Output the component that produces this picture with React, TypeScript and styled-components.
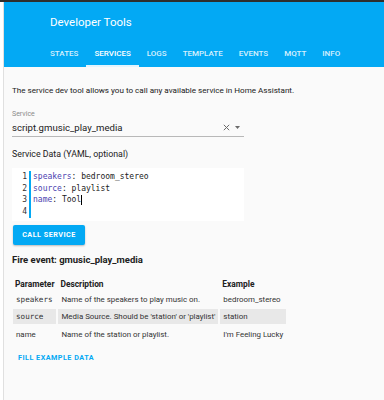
import React from "react";
import styled, { createGlobalStyle } from "styled-components";

const Global = createGlobalStyle`
  html, body { margin: 0; padding: 0; background: #ffffff; }
  body { font-family: Roboto, "Liberation Sans", sans-serif; color: #212121; }
  * { box-sizing: border-box; }
`;

const Frame = styled.div`
  width: 384px;
  height: 400px;
  border-top: 2px solid #2e2e2e;
  padding-left: 3px;
  background: #ffffff;
  overflow: hidden;
`;

const Main = styled.div`
  height: 100%;
  border-left: 1px solid #e0e0e0;
  background: #fafafa;
  display: flex;
  flex-direction: column;
`;

const Header = styled.header`
  background: #03a9f4;
  height: 65px;
  display: flex;
  flex-direction: column;
`;

const Title = styled.div`
  height: 38px;
  padding-left: 46px;
  padding-top: 2px;
  display: flex;
  align-items: center;
  color: #ffffff;
  font-size: 11.5px;
  font-weight: 400;
`;

const Tabs = styled.nav`
  display: flex;
  padding-left: 38px;
  height: 27px;
`;

const Tab = styled.div<{ $active?: boolean }>`
  display: flex;
  align-items: center;
  padding: 2px 8px 0 8px;
  font-size: 8px;
  font-weight: 500;
  color: ${(p) => (p.$active ? "#ffffff" : "rgba(255,255,255,0.85)")};
  border-bottom: 2px solid ${(p) => (p.$active ? "#e3f4fd" : "transparent")};
`;

const Content = styled.main`
  padding: 16px 8px 0 8px;
  display: flex;
  flex-direction: column;
`;

const Intro = styled.p`
  margin: 0;
  font-size: 8.1px;
  line-height: 14px;
`;

const Field = styled.div`
  margin-top: 12px;
  width: 232px;
  border-bottom: 1px solid #b8b8b8;
  display: flex;
  flex-direction: column;
`;

const FieldLabel = styled.div`
  font-size: 7px;
  color: #8a8a8a;
  line-height: 10px;
`;

const FieldRow = styled.div`
  display: flex;
  align-items: center;
  height: 17px;
`;

const FieldValue = styled.div`
  flex: 1;
  font-size: 9.6px;
  color: #212121;
`;

const Icons = styled.div`
  display: flex;
  align-items: center;
  gap: 5px;
  padding-right: 4px;
`;

const SectionLabel = styled.div`
  margin-top: 10px;
  font-size: 8.8px;
  line-height: 14px;
`;

const Editor = styled.div`
  margin-top: 7px;
  width: 232px;
  background: #ffffff;
  padding: 3px 0;
  display: flex;
`;

const Gutter = styled.div`
  width: 17px;
  padding-right: 2px;
  text-align: right;
  font-family: "DejaVu Sans Mono", "Liberation Mono", monospace;
  font-size: 8px;
  line-height: 11.7px;
  color: #333;
`;

const Code = styled.div`
  flex: 1;
  border-left: 2px solid #03a9f4;
  padding-left: 2px;
  font-family: "DejaVu Sans Mono", "Liberation Mono", monospace;
  font-size: 8px;
  line-height: 11.7px;
  color: #222;
  white-space: pre;
`;

const Line = styled.div`
  height: 11.7px;
  display: flex;
  align-items: center;
`;

const Key = styled.span`
  color: #4b3fb0;
`;

const Caret = styled.span`
  display: inline-block;
  width: 1px;
  height: 10px;
  background: #000;
`;

const Button = styled.button`
  margin-top: 4px;
  margin-left: 1px;
  align-self: flex-start;
  width: 72px;
  height: 20px;
  border: none;
  border-radius: 2px;
  background: #03a9f4;
  color: #ffffff;
  font-family: Roboto, "Liberation Sans", sans-serif;
  font-size: 7.2px;
  font-weight: 700;
  letter-spacing: 0.5px;
  box-shadow: 0 1px 2px rgba(0, 0, 0, 0.25);
  padding: 0;
`;

const EventTitle = styled.div`
  margin-top: 8px;
  font-size: 9.5px;
  font-weight: 700;
  line-height: 14px;
`;

const Table = styled.table`
  margin-top: 9.5px;
  margin-left: -1px;
  align-self: flex-start;
  border-spacing: 2px;
  font-size: 7.9px;
`;

const Th = styled.th`
  text-align: left;
  font-weight: 700;
  font-size: 8.4px;
  padding: 0 2px;
  height: 11px;
`;

const Tr = styled.tr<{ $shade?: boolean }>`
  background: ${(p) => (p.$shade ? "#e8e8e8" : "transparent")};
`;

const Td = styled.td<{ $mono?: boolean }>`
  height: 15.5px;
  padding: 0 3px;
  white-space: nowrap;
  font-family: ${(p) =>
    p.$mono ? '"DejaVu Sans Mono", "Liberation Mono", monospace' : 'Roboto, "Liberation Sans", sans-serif'};
  font-size: ${(p) => (p.$mono ? "7.6px" : "7.9px")};
  color: #333;
`;

const TextButton = styled.div`
  margin-top: 10px;
  margin-left: 6px;
  font-size: 7.2px;
  line-height: 8px;
  font-weight: 700;
  letter-spacing: 0.5px;
  color: #03a9f4;
`;

const tabs = ["STATES", "SERVICES", "LOGS", "TEMPLATE", "EVENTS", "MQTT", "INFO"];

const rows = [
  { p: "speakers", d: "Name of the speakers to play music on.", e: "bedroom_stereo" },
  { p: "source", d: "Media Source. Should be 'station' or 'playlist'", e: "station" },
  { p: "name", d: "Name of the station or playlist.", e: "I'm Feeling Lucky" },
];

export default function App() {
  return (
    <>
      <Global />
      <Frame>
        <Main>
          <Header>
            <Title>Developer Tools</Title>
            <Tabs>
              {tabs.map((t) => (
                <Tab key={t} $active={t === "SERVICES"}>
                  {t}
                </Tab>
              ))}
            </Tabs>
          </Header>
          <Content>
            <Intro>The service dev tool allows you to call any available service in Home Assistant.</Intro>
            <Field>
              <FieldLabel>Service</FieldLabel>
              <FieldRow>
                <FieldValue>script.gmusic_play_media</FieldValue>
                <Icons>
                  <svg width="7" height="7" viewBox="0 0 7 7">
                    <path d="M0.8 0.8 L6.2 6.2 M6.2 0.8 L0.8 6.2" stroke="#6b6b6b" strokeWidth="1" />
                  </svg>
                  <svg width="5" height="3" viewBox="0 0 5 3">
                    <path d="M0 0 L5 0 L2.5 3 Z" fill="#6b6b6b" />
                  </svg>
                </Icons>
              </FieldRow>
            </Field>
            <SectionLabel>Service Data (YAML, optional)</SectionLabel>
            <Editor>
              <Gutter>
                <div>1</div>
                <div>2</div>
                <div>3</div>
                <div>4</div>
              </Gutter>
              <Code>
                <Line>
                  <Key>speakers</Key>: bedroom_stereo
                </Line>
                <Line>
                  <Key>source</Key>: playlist
                </Line>
                <Line>
                  <Key>name</Key>: Tool
                  <Caret />
                </Line>
                <Line> </Line>
              </Code>
            </Editor>
            <Button>CALL SERVICE</Button>
            <EventTitle>Fire event: gmusic_play_media</EventTitle>
            <Table>
              <thead>
                <tr>
                  <Th>Parameter</Th>
                  <Th>Description</Th>
                  <Th>Example</Th>
                </tr>
              </thead>
              <tbody>
                {rows.map((r, i) => (
                  <Tr key={r.p} $shade={i === 1}>
                    <Td $mono={i !== 2}>{r.p}</Td>
                    <Td>{r.d}</Td>
                    <Td>{r.e}</Td>
                  </Tr>
                ))}
              </tbody>
            </Table>
            <TextButton>FILL EXAMPLE DATA</TextButton>
          </Content>
        </Main>
      </Frame>
    </>
  );
}
